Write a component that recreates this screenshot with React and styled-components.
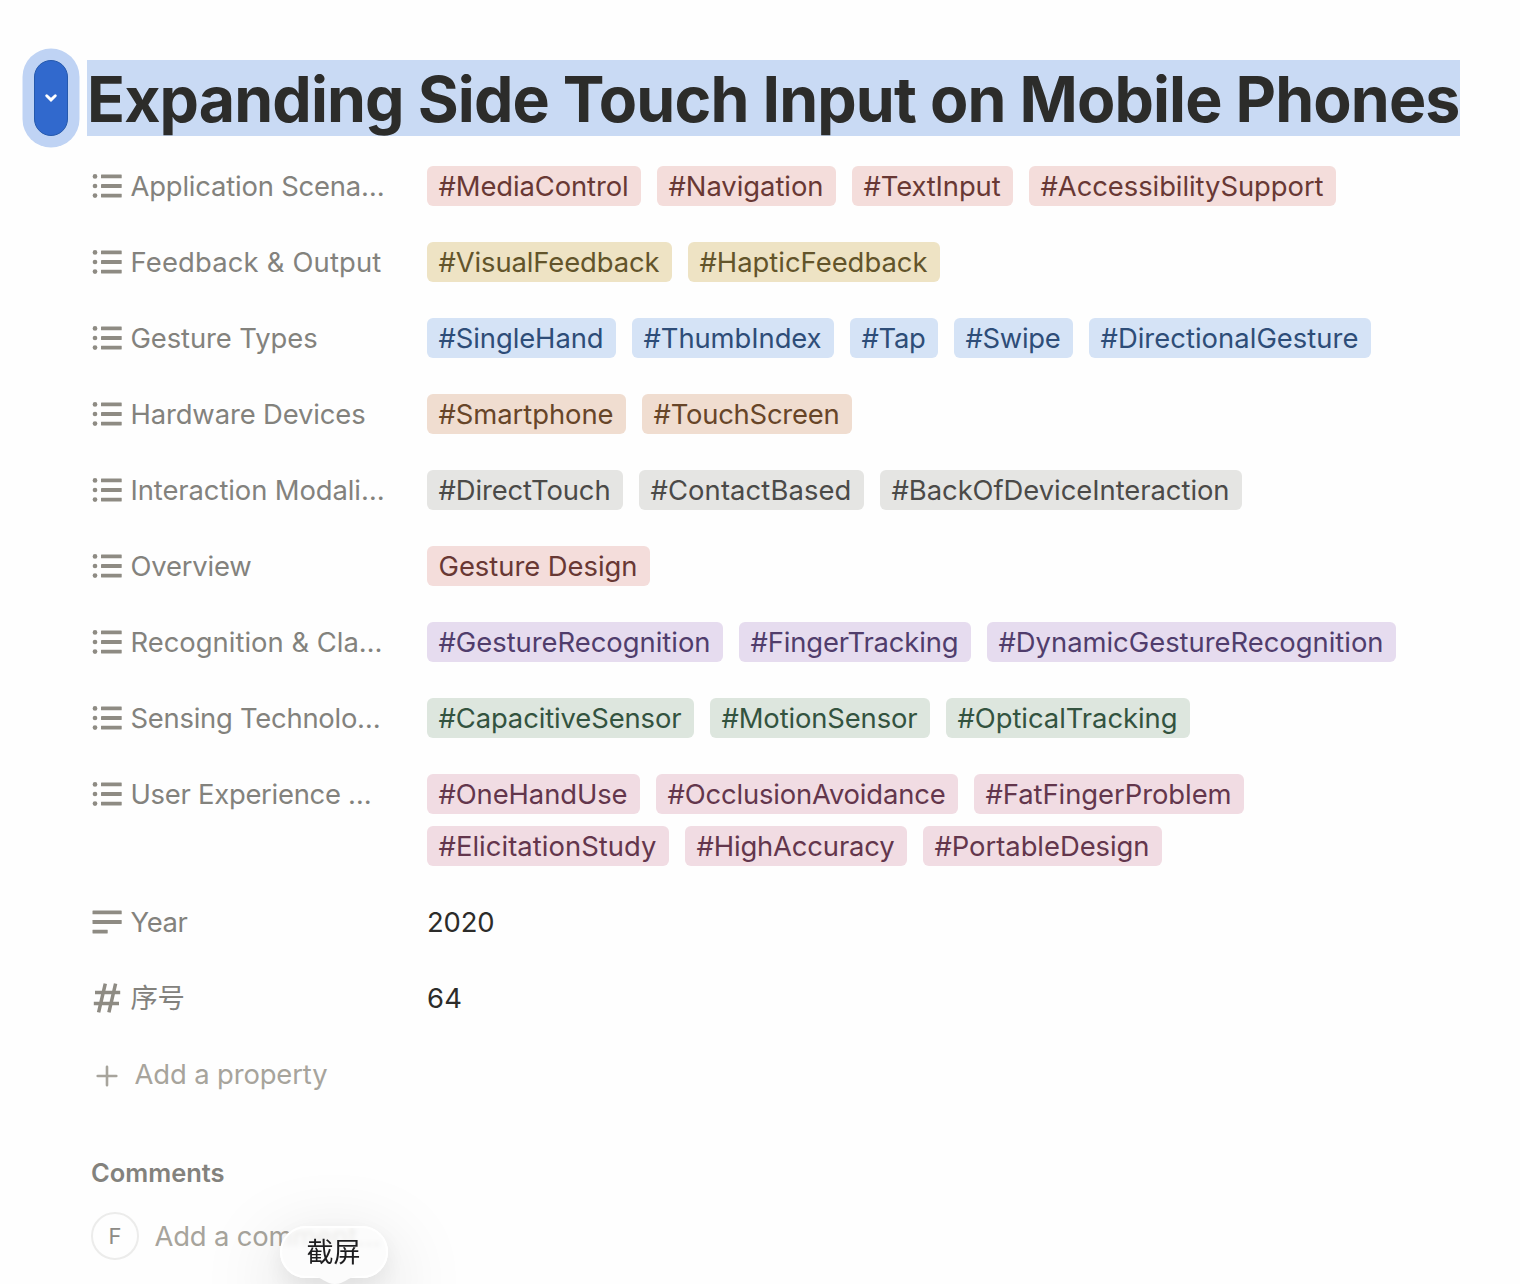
import React, { useLayoutEffect, useRef, useState } from "react";
import styled, { createGlobalStyle } from "styled-components";

const GlobalStyle = createGlobalStyle`
  * { box-sizing: border-box; }
  body {
    margin: 0;
    background: #fefefe;
    overflow: hidden;
    font-family: Inter, "Noto Sans CJK SC", sans-serif;
    font-weight: 420;
  }
`;

const palette = {
  red: ["#f4dddb", "#683834"],
  yellow: ["#eee3c4", "#62542a"],
  blue: ["#d5e3f6", "#2e4d78"],
  orange: ["#f0ddd0", "#674528"],
  gray: ["#e5e5e3", "#4b4a48"],
  purple: ["#e6dcef", "#503d6c"],
  green: ["#dde6de", "#33533f"],
  pink: ["#f1dce3", "#63364c"],
};

const Page = styled.main`
  position: relative;
  width: 1520px;
  height: 1284px;
  padding: 60px 0 0 34px;
  overflow: hidden;
  background: #fefefe;
`;

const Header = styled.header`
  display: flex;
  gap: 19px;
  height: 76px;
`;

const Toggle = styled.button`
  display: flex;
  align-items: center;
  justify-content: center;
  width: 34px;
  height: 76px;
  padding: 0;
  border: 1px solid #2559ad;
  border-radius: 17px;
  background: #3169cd;
  box-shadow: 0 0 0 11.5px #bfd3f4;
`;

const Title = styled.h1`
  width: 1373px;
  height: 76px;
  margin: 0;
  background: #c9daf4;
  color: #2c2c2a;
  font-size: 62.6px;
  font-weight: 740;
  line-height: 79px;
`;

const Text = styled.span`
  display: inline-block;
  white-space: pre;
`;

const Properties = styled.section`
  display: flex;
  flex-direction: column;
  gap: 36px;
  padding: 30px 0 0 57px;
`;

const Property = styled.div`
  display: flex;
  align-items: flex-start;
`;

const Label = styled.div`
  display: flex;
  align-items: center;
  gap: 7.5px;
  width: 336px;
  height: 40px;
  color: #83827d;
  font-size: 27.4px;
  line-height: 40px;

  svg { flex: none; }
`;

const Tags = styled.div`
  display: flex;
  flex-wrap: wrap;
  gap: 12px 16px;
  width: 990px;
`;

const Tag = styled.span`
  height: 40px;
  padding: 0 12.5px 0 11.5px;
  border-radius: 6px;
  background: ${(p) => palette[p.$tone][0]};
  color: ${(p) => palette[p.$tone][1]};
  font-size: 27.4px;
  line-height: 40px;
`;

const Value = styled.span`
  height: 40px;
  color: #2c2c2a;
  font-size: 27.4px;
  line-height: 40px;
`;

const AddProperty = styled.div`
  display: flex;
  align-items: center;
  gap: 11.5px;
  height: 40px;
  color: #a7a49c;
  font-size: 27.4px;
  line-height: 40px;
`;

const Comments = styled.section`
  padding: 62px 0 0 57px;
`;

const CommentsTitle = styled.h2`
  margin: 0;
  color: #83827d;
  font-size: 25.5px;
  font-weight: 600;
  line-height: 34px;
`;

const Composer = styled.div`
  display: flex;
  align-items: center;
  gap: 15.5px;
  height: 48px;
  margin-top: 22px;
  color: #a7a49c;
  font-size: 27.4px;
  line-height: 40px;
`;

const Avatar = styled.span`
  display: flex;
  align-items: center;
  justify-content: center;
  width: 48px;
  height: 48px;
  border: 2px solid #ececeb;
  border-radius: 50%;
  color: #8d8b86;
  font-size: 22px;
`;

const Tooltip = styled.div`
  position: absolute;
  left: 280px;
  top: 1226px;
  width: 108px;
  height: 52px;
  border-radius: 26px;
  border: 2px solid #ffffff;
  background: rgba(251, 251, 251, 0.8);
  backdrop-filter: blur(2.5px);
  box-shadow: 0 26px 80px 8px rgba(0, 0, 0, 0.13), 0 8px 26px rgba(0, 0, 0, 0.07);
  color: #1d1d1f;
  font-size: 27px;
  font-weight: 400;
  line-height: 50px;
  text-align: center;
  text-indent: -1px;
`;

const Tail = styled.svg`
  position: absolute;
  left: 31px;
  top: 47px;
`;

/* Spreads the letter spacing so that the text fills the given width. */
function Fit({ width, children }) {
  const ref = useRef(null);
  const [spacing, setSpacing] = useState(0);
  useLayoutEffect(() => {
    const natural = ref.current.getBoundingClientRect().width;
    setSpacing((width - natural) / children.length);
  }, []);
  return (
    <Text ref={ref} style={{ letterSpacing: spacing }}>
      {children}
    </Text>
  );
}

const ListIcon = () => (
  <svg width="32" height="32" viewBox="0 0 32 32" fill="#8e8b83">
    <circle cx="4" cy="6.4" r="2.35" />
    <circle cx="4" cy="16" r="2.35" />
    <circle cx="4" cy="25.6" r="2.35" />
    <rect x="10" y="4.5" width="20.7" height="3.8" rx="0.4" />
    <rect x="10" y="14.1" width="20.7" height="3.8" rx="0.4" />
    <rect x="10" y="23.7" width="20.7" height="3.8" rx="0.4" />
  </svg>
);

const TextIcon = () => (
  <svg width="32" height="32" viewBox="0 0 32 32" fill="#8e8b83">
    <rect x="1.5" y="4.5" width="29.2" height="3.8" rx="0.4" />
    <rect x="1.5" y="14.1" width="29.2" height="3.8" rx="0.4" />
    <rect x="1.5" y="23.7" width="15.2" height="3.8" rx="0.4" />
  </svg>
);

const NumberIcon = () => (
  <svg width="32" height="32" viewBox="0 0 32 32" fill="none" stroke="#8e8b83" strokeWidth="3.5">
    <path d="M4 10.5H29.2M2.8 21.5H28M14.3 1.7 7.6 30.3M24.6 1.7 17.9 30.3" />
  </svg>
);

const PlusIcon = () => (
  <svg width="32" height="32" viewBox="0 0 32 32" fill="none" stroke="#a7a49c" strokeWidth="2.6" strokeLinecap="round">
    <path d="M6.7 18H25.3M16 8.7V27.3" />
  </svg>
);

const rows = [
  ["Application Scena…", 254, "red", [["#MediaControl", 214], ["#Navigation", 179], ["#TextInput", 161], ["#AccessibilitySupport", 307]]],
  ["Feedback & Output", 251, "yellow", [["#VisualFeedback", 245], ["#HapticFeedback", 252]]],
  ["Gesture Types", 187, "blue", [["#SingleHand", 189], ["#ThumbIndex", 202], ["#Tap", 88], ["#Swipe", 119], ["#DirectionalGesture", 282]]],
  ["Hardware Devices", 235, "orange", [["#Smartphone", 199], ["#TouchScreen", 210]]],
  ["Interaction Modali…", 254, "gray", [["#DirectTouch", 196], ["#ContactBased", 225], ["#BackOfDeviceInteraction", 362]]],
  ["Overview", 121, "red", [["Gesture Design", 223]]],
  ["Recognition & Cla…", 252, "purple", [["#GestureRecognition", 296], ["#FingerTracking", 232], ["#DynamicGestureRecognition", 409]]],
  ["Sensing Technolo…", 250, "green", [["#CapacitiveSensor", 267], ["#MotionSensor", 220], ["#OpticalTracking", 244]]],
  ["User Experience …", 241, "pink", [["#OneHandUse", 213], ["#OcclusionAvoidance", 302], ["#FatFingerProblem", 270], ["#ElicitationStudy", 242], ["#HighAccuracy", 222], ["#PortableDesign", 239]]],
];

export default function App() {
  return (
    <Page>
      <GlobalStyle />
      <Header>
        <Toggle aria-label="Toggle">
          <svg width="14" height="10" viewBox="0 0 14 10" fill="none" stroke="#fff" strokeWidth="2.9" strokeLinecap="round" strokeLinejoin="miter">
            <path d="M2.7 2.8 7 6.9 11.3 2.8" />
          </svg>
        </Toggle>
        <Title><Fit width={1372.5}>Expanding Side Touch Input on Mobile Phones</Fit></Title>
      </Header>
      <Properties>
        {rows.map(([label, width, tone, tags]) => (
          <Property key={label}>
            <Label><ListIcon /><Fit width={width}>{label}</Fit></Label>
            <Tags>
              {tags.map(([text, w]) => (
                <Tag key={text} $tone={tone}><Fit width={w - 24}>{text}</Fit></Tag>
              ))}
            </Tags>
          </Property>
        ))}
        <Property>
          <Label><TextIcon /><Fit width={57}>Year</Fit></Label>
          <Value><Fit width={67.5}>2020</Fit></Value>
        </Property>
        <Property>
          <Label><NumberIcon /><Fit width={54}>序号</Fit></Label>
          <Value><Fit width={35}>64</Fit></Value>
        </Property>
        <AddProperty><PlusIcon /><Fit width={193}>Add a property</Fit></AddProperty>
      </Properties>
      <Comments>
        <CommentsTitle><Fit width={133.5}>Comments</Fit></CommentsTitle>
        <Composer>
          <Avatar>F</Avatar>
          <Fit width={226}>Add a comment…</Fit>
        </Composer>
      </Comments>
      <Tooltip>
        截屏
        <Tail width="44" height="12" viewBox="0 0 44 12" fill="#fcfcfc">
          <path d="M0 1C9 2 13 9 22 9S35 2 44 1Z" />
        </Tail>
      </Tooltip>
    </Page>
  );
}
